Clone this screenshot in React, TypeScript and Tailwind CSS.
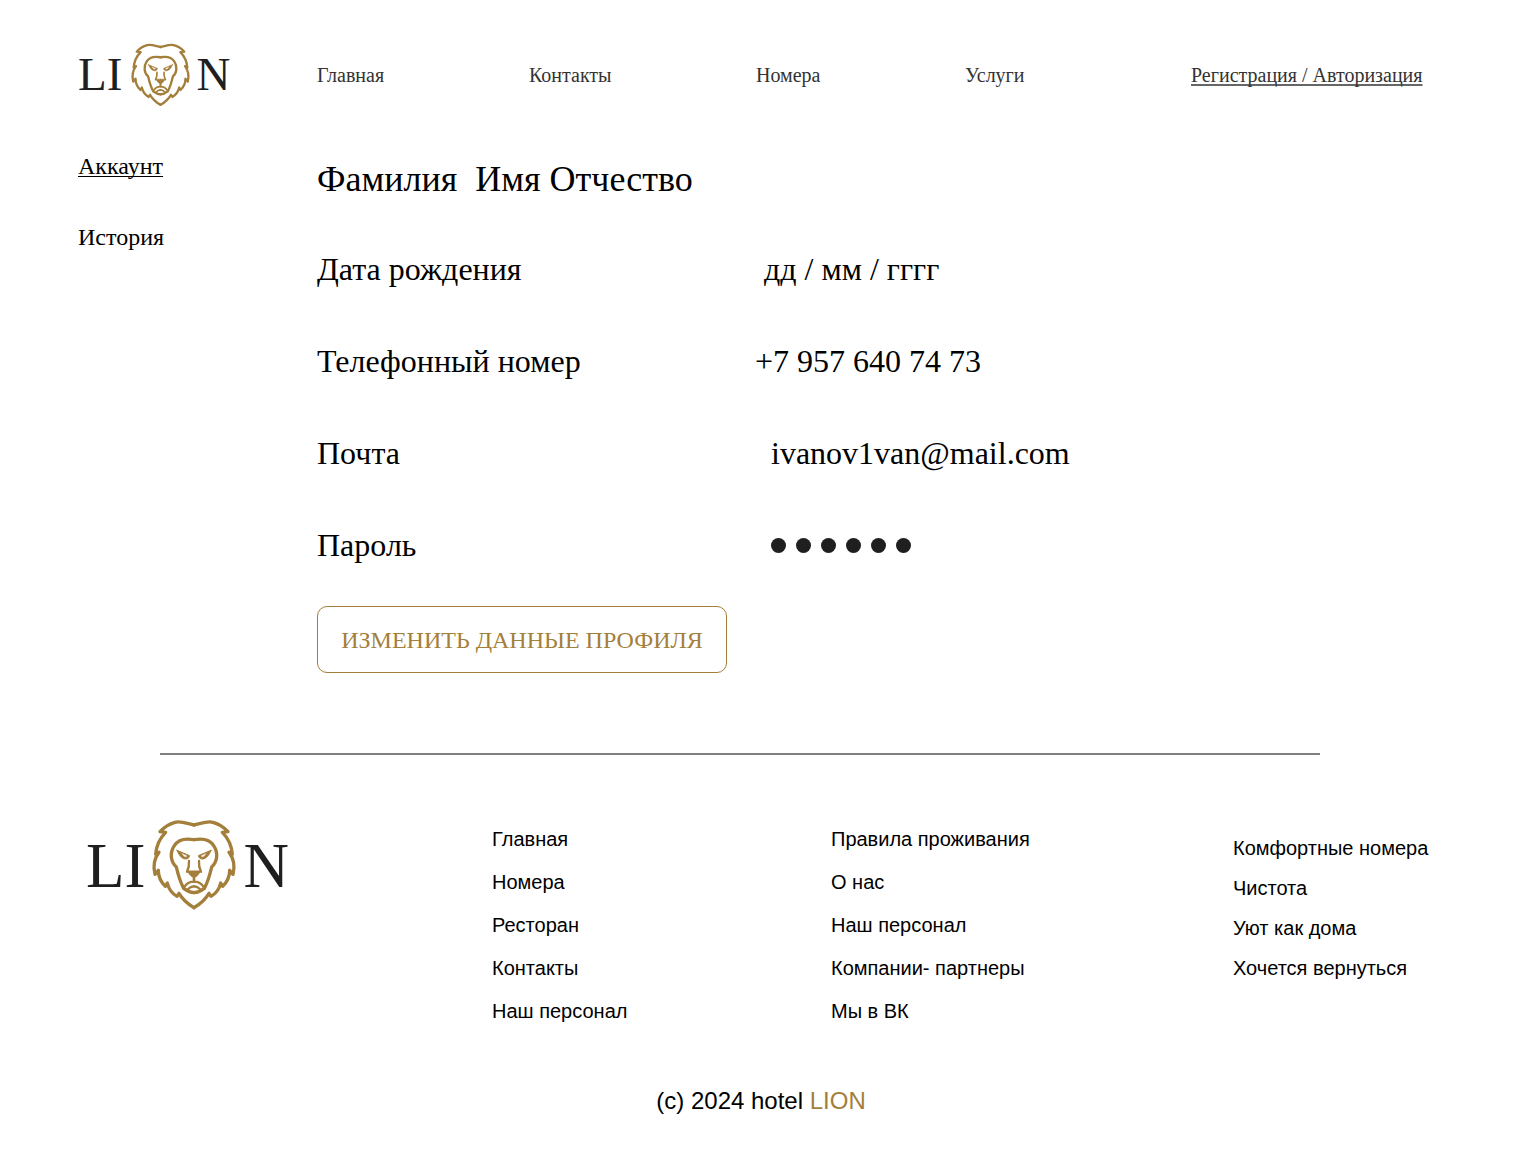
const GOLD = "#a47f3b";

function LionHalf() {
  return (
    <g fill="none" stroke={GOLD} strokeWidth="10" strokeLinejoin="round" strokeLinecap="round">
      <path d="M135 30C115 26 95 17 78 22C60 27 44 38 33 50L50 52C34 68 22 92 20 118L30 112C15 132 12 155 18 178L28 166C28 186 36 202 49 214L55 204C59 222 70 236 84 244L90 235C100 252 118 268 135 278" />
      <path d="M135 74C112 70 88 72 76 92C62 113 64 140 82 156C87 178 92 198 104 220C114 228 124 232 135 233" />
      <path d="M120 138C121 150 119 160 114 170" strokeWidth="7" />
      <path d="M135 188V200C124 200 112 206 106 216" strokeWidth="7" />
      <path d="M116 224C122 216 128 214 135 214" strokeWidth="7" />
      <path d="M84 106L122 122C120 132 110 134 102 130C94 126 88 116 84 106Z" strokeWidth="3" fill={GOLD} />
      <path d="M100 116L114 123C110 127 104 125 100 116Z" strokeWidth="1" fill="#fff" stroke="#fff" />
      <path d="M116 168H135V188C127 185 120 178 116 168Z" strokeWidth="3" fill={GOLD} />
    </g>
  );
}

function Lion({ className }: { className: string }) {
  return (
    <svg viewBox="0 0 270 300" className={className} aria-hidden="true">
      <LionHalf />
      <g transform="translate(270 0) scale(-1 1)">
        <LionHalf />
      </g>
    </svg>
  );
}

function Row({ label, value, offset }: { label: string; value: React.ReactNode; offset: string }) {
  return (
    <div className="flex h-[92px] items-center text-[32px] text-black">
      <div className="w-[438px]">{label}</div>
      <div className={offset}>{value}</div>
    </div>
  );
}

const col1 = ["Главная", "Номера", "Ресторан", "Контакты", "Наш персонал"];
const col2 = ["Правила проживания", "О нас", "Наш персонал", "Компании- партнеры", "Мы в ВК"];
const col3 = ["Комфортные номера", "Чистота", "Уют как дома", "Хочется вернуться"];

export default function App() {
  return (
    <div className="h-[1159px] w-[1520px] overflow-hidden bg-white font-['Liberation_Serif',serif] text-[#1f1f1f]">
      <header className="flex h-[149px] items-start pl-[78px] pt-[43px]">
        <div className="mt-[1px] flex h-[62px] w-[239px] items-center text-[47px] leading-none">
          <span className="-mt-[2px]">LI</span>
          <Lion className="ml-[7px] h-[70px] w-[63px] shrink-0" />
          <span className="-mt-[2px] ml-[4px]">N</span>
        </div>
        <nav className="flex h-[64px] items-center text-[20px] text-[#333]">
          <a className="w-[212px]">Главная</a>
          <a className="w-[227px]">Контакты</a>
          <a className="w-[209px]">Номера</a>
          <a className="w-[226px]">Услуги</a>
          <a className="underline decoration-[#666] decoration-2 underline-offset-2 [text-decoration-skip-ink:none]">
            Регистрация / Авторизация
          </a>
        </nav>
      </header>

      <main className="flex h-[604px] items-start pl-[78px]">
        <aside className="w-[239px] text-[24px] text-black">
          <a className="block h-[71px] leading-[34px] underline decoration-1 underline-offset-2 [text-decoration-skip-ink:none]">
            Аккаунт
          </a>
          <a className="block leading-[34px]">История</a>
        </aside>
        <div>
          <h1 className="flex h-[60px] items-center whitespace-pre text-[36px] font-normal text-black">
            Фамилия  Имя Отчество
          </h1>
          <div className="h-[14px]" />
          <Row label="Дата рождения" value="дд / мм / гггг" offset="pl-[9px]" />
          <Row label="Телефонный номер" value="+7 957 640 74 73" offset="" />
          <Row label="Почта" value="ivanov1van@mail.com" offset="pl-[16px]" />
          <Row
            label="Пароль"
            offset="pl-[16px]"
            value={
              <div className="flex gap-[10px]">
                {[0, 1, 2, 3, 4, 5].map((i) => (
                  <span key={i} className="h-[15px] w-[15px] rounded-full bg-[#1f1f1f]" />
                ))}
              </div>
            }
          />
          <button className="mt-[15px] h-[67px] w-[410px] rounded-[10px] border border-[#a47f3b] text-[24px] text-[#a47f3b]">
            ИЗМЕНИТЬ ДАННЫЕ ПРОФИЛЯ
          </button>
        </div>
      </main>

      <div className="ml-[160px] h-[2px] w-[1160px] bg-[#808080]" />

      <footer className="flex items-start pl-[86px] pt-[65px] font-['Liberation_Sans',sans-serif] text-[20px] text-black">
        <div className="flex h-[90px] w-[406px] items-center font-['Liberation_Serif',serif] text-[63px] leading-none text-[#1f1f1f]">
          <span className="mt-[2px]">LI</span>
          <Lion className="ml-[4px] h-[100px] w-[90px] shrink-0" />
          <span className="ml-[4px] mt-[2px]">N</span>
        </div>
        <ul className="-mt-[2px] w-[339px]">
          {col1.map((t) => (
            <li key={t} className="h-[43px] leading-[43px]">{t}</li>
          ))}
        </ul>
        <ul className="-mt-[2px] w-[402px]">
          {col2.map((t) => (
            <li key={t} className="h-[43px] leading-[43px]">{t}</li>
          ))}
        </ul>
        <ul className="pt-[8px]">
          {col3.map((t) => (
            <li key={t} className="h-[40px] leading-[40px]">{t}</li>
          ))}
        </ul>
      </footer>

      <p className="pl-[2px] pt-[50px] text-center font-['Liberation_Sans',sans-serif] text-[24px] text-black">
        (c) 2024 hotel <span className="text-[#a47f3b]">LION</span>
      </p>
    </div>
  );
}
